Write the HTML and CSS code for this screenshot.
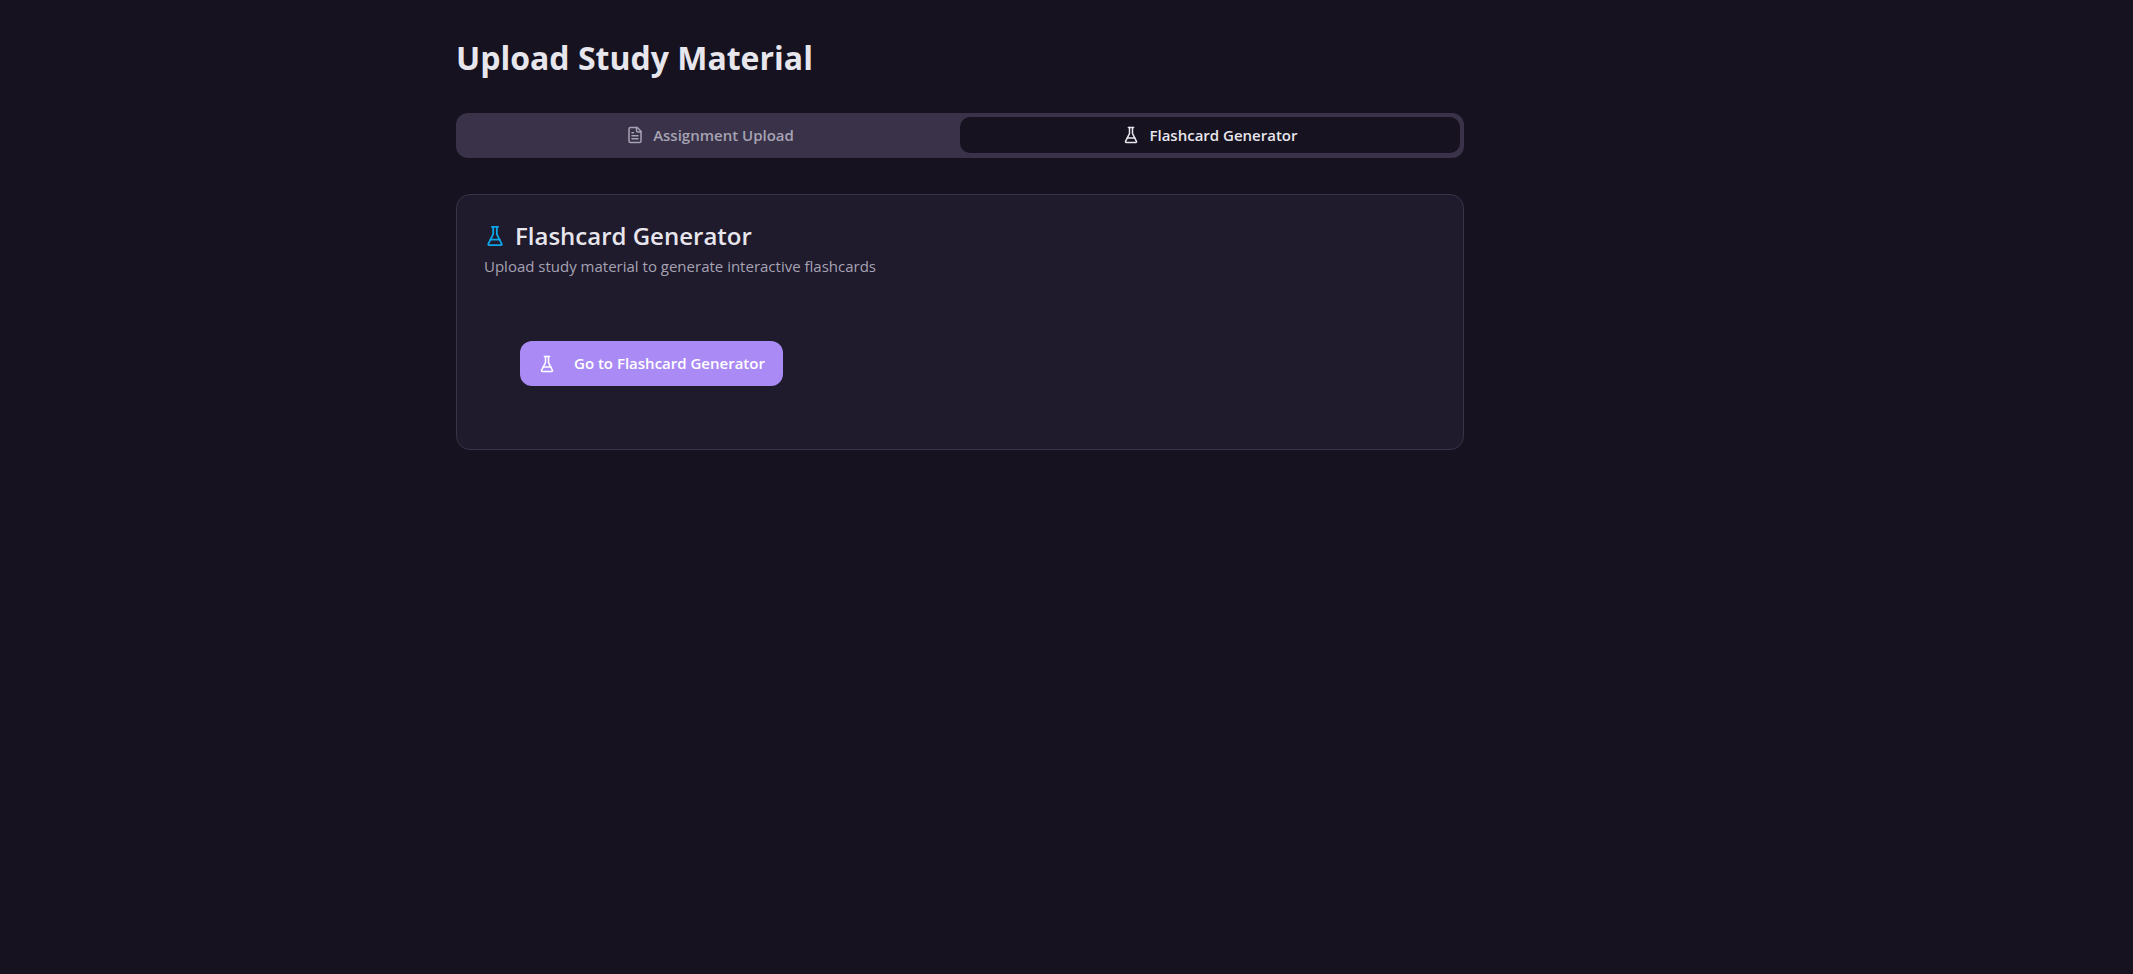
FILE: index.html
```
<!DOCTYPE html>
<html lang="en">
<head>
    <meta charset="UTF-8">
    <meta name="viewport" content="width=device-width, initial-scale=1.0">
    <title>Upload Study Material</title>
    <link rel="stylesheet" href="styles.css">
</head>
<body>
<div class="page">
    <main class="container">
        <h1 class="page-title">Upload Study Material</h1>

        <div class="tabs" role="tablist">
            <button class="tab" type="button" role="tab" aria-selected="false">
                <svg class="icon" viewBox="0 0 24 24">
                    <path d="M15 2H6a2 2 0 0 0-2 2v16a2 2 0 0 0 2 2h12a2 2 0 0 0 2-2V7Z"/>
                    <path d="M14 2v4a2 2 0 0 0 2 2h4"/>
                    <path d="M10 9H8"/>
                    <path d="M16 13H8"/>
                    <path d="M16 17H8"/>
                </svg>
                <span>Assignment Upload</span>
            </button>
            <button class="tab active" type="button" role="tab" aria-selected="true">
                <svg class="icon" viewBox="0 0 24 24">
                    <path d="M10 2v7.527a2 2 0 0 1-.211.896L4.72 20.55a1 1 0 0 0 .9 1.45h12.76a1 1 0 0 0 .9-1.45l-5.069-10.127A2 2 0 0 1 14 9.527V2"/>
                    <path d="M8.5 2h7"/>
                    <path d="M7 16h10"/>
                </svg>
                <span>Flashcard Generator</span>
            </button>
        </div>

        <section class="card" role="tabpanel">
            <div class="card-header">
                <h2 class="card-title">
                    <svg class="icon icon-blue" viewBox="0 0 24 24">
                        <path d="M10 2v7.527a2 2 0 0 1-.211.896L4.72 20.55a1 1 0 0 0 .9 1.45h12.76a1 1 0 0 0 .9-1.45l-5.069-10.127A2 2 0 0 1 14 9.527V2"/>
                        <path d="M8.5 2h7"/>
                        <path d="M7 16h10"/>
                    </svg>
                    <span>Flashcard Generator</span>
                </h2>
                <p class="card-text">Upload study material to generate interactive flashcards</p>
            </div>
            <div class="card-content">
                <button class="btn" type="button">
                    <svg class="icon" viewBox="0 0 24 24">
                        <path d="M10 2v7.527a2 2 0 0 1-.211.896L4.72 20.55a1 1 0 0 0 .9 1.45h12.76a1 1 0 0 0 .9-1.45l-5.069-10.127A2 2 0 0 1 14 9.527V2"/>
                        <path d="M8.5 2h7"/>
                        <path d="M7 16h10"/>
                    </svg>
                    <span>Go to Flashcard Generator</span>
                </button>
            </div>
        </section>
    </main>
</div>
</body>
</html>
```
FILE: styles.css
```
* {
    box-sizing: border-box;
}
body {
    margin: 0;
    min-height: 100vh;
    background-color: #16121f;
    color: #e8e6ed;
    font-family: "Segoe UI", "Open Sans", "Noto Sans", sans-serif;
    font-size: 15px;
}
h1, h2, p {
    margin: 0;
}
button {
    border: none;
    font-family: inherit;
    font-size: 15px;
    font-weight: 600;
    line-height: 23px;
    cursor: pointer;
}
.page {
    max-width: 1920px;
}
.container {
    max-width: 1008px;
    margin: 0 auto;
    padding: 36px 0;
}
.page-title {
    margin-bottom: 34px;
    font-size: 32px;
    font-weight: 700;
    line-height: 43px;
}
.icon {
    width: 18px;
    height: 18px;
    flex-shrink: 0;
    fill: none;
    stroke: currentColor;
    stroke-width: 2;
    stroke-linecap: round;
    stroke-linejoin: round;
}
.tabs {
    display: grid;
    grid-template-columns: 1fr 1fr;
    height: 45px;
    margin-bottom: 36px;
    padding: 4px 4px 5px;
    border-radius: 12px;
    background-color: #393249;
}
.tab {
    display: flex;
    align-items: center;
    justify-content: center;
    gap: 9px;
    padding: 0 14px;
    border-radius: 10px;
    background: none;
    color: #a6a3b3;
}
.tab.active {
    background-color: #16121f;
    color: #e8e6ed;
}
.card {
    border: 1px solid #393249;
    border-radius: 14px;
    background-color: #1f1a2c;
}
.card-header {
    padding: 27px;
}
.card-title {
    display: flex;
    align-items: center;
    gap: 9px;
    margin-bottom: 6px;
    font-size: 24px;
    font-weight: 600;
    line-height: 27px;
}
.card-title .icon {
    width: 22px;
    height: 22px;
}
.icon-blue {
    color: #0ea5e9;
}
.card-text {
    color: #a6a3b3;
    line-height: 23px;
}
.card-content {
    padding: 36px 63px 63px;
}
.btn {
    display: flex;
    align-items: center;
    gap: 18px;
    height: 45px;
    padding: 0 18px;
    border-radius: 12px;
    background-color: #aa8bf5;
    color: #fff;
}
```
